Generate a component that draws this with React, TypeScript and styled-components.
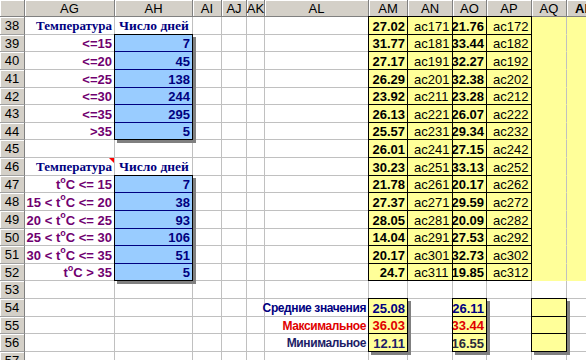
import React from 'react';
import styled, {createGlobalStyle} from 'styled-components';

const FONT = `"Liberation Sans Narrow", "Arial Narrow", "Liberation Sans", Arial, sans-serif`;
const SERIF = `"Liberation Serif", "Times New Roman", serif`;
const GRID = '#c0c0c0';
const YELLOW = '#ffff99';
const BLUE = '#99ccff';
const NAVY = '#000080';
const PURPLE = '#700070';
const RED = '#e00000';

const COLS = [
    {name: 'AG', w: 90},
    {name: 'AH', w: 78},
    {name: 'AI', w: 29},
    {name: 'AJ', w: 25},
    {name: 'AK', w: 18},
    {name: 'AL', w: 104},
    {name: 'AM', w: 39},
    {name: 'AN', w: 45},
    {name: 'AO', w: 34},
    {name: 'AP', w: 45},
    {name: 'AQ', w: 35},
    {name: 'AR', w: 36},
];

const FIRST_ROW = 38;
const ROWS = Array.from({length: 20}, (_, i) => FIRST_ROW + i);
const ROW_H = ROWS.map((_, i) => Math.round(17 + 17.63 * (i + 1)) - Math.round(17 + 17.63 * i));

// AM, AN, AO, AP for rows 38..52
const TABLE = [
    ['27.02', 'ac171', '21.76', 'ac172'],
    ['31.77', 'ac181', '33.44', 'ac182'],
    ['27.17', 'ac191', '32.27', 'ac192'],
    ['26.29', 'ac201', '32.38', 'ac202'],
    ['23.92', 'ac211', '23.28', 'ac212'],
    ['26.13', 'ac221', '26.07', 'ac222'],
    ['25.57', 'ac231', '29.34', 'ac232'],
    ['26.01', 'ac241', '27.15', 'ac242'],
    ['30.23', 'ac251', '33.13', 'ac252'],
    ['21.78', 'ac261', '20.17', 'ac262'],
    ['27.37', 'ac271', '29.59', 'ac272'],
    ['28.05', 'ac281', '20.09', 'ac282'],
    ['14.04', 'ac291', '27.53', 'ac292'],
    ['20.17', 'ac301', '32.73', 'ac302'],
    ['24.7', 'ac311', '19.85', 'ac312'],
];

const FIRST_BAND = [
    {label: '<=15', days: '7'},
    {label: '<=20', days: '45'},
    {label: '<=25', days: '138'},
    {label: '<=30', days: '244'},
    {label: '<=35', days: '295'},
    {label: '>35', days: '5'},
];

const SECOND_BAND = [
    {from: '', to: '<= 15', days: '7'},
    {from: '15 <', to: '<= 20', days: '38'},
    {from: '20 <', to: '<= 25', days: '93'},
    {from: '25 <', to: '<= 30', days: '106'},
    {from: '30 <', to: '<= 35', days: '51'},
    {from: '', to: '> 35', days: '5'},
];

const SUMMARY = [
    {label: 'Средние значения', color: NAVY, am: '25.08', amColor: NAVY, ao: '26.11', aoColor: NAVY},
    {label: 'Максимальное', color: RED, am: '36.03', amColor: RED, ao: '33.44', aoColor: RED},
    {label: 'Минимальное', color: '#1c1c66', am: '12.11', amColor: '#1c1c66', ao: '16.55', aoColor: '#2a2a3a'},
];

const GlobalStyle = createGlobalStyle`
  html, body {
    margin: 0;
    padding: 0;
    background: #fff;
    overflow: hidden;
  }
`;

const Sheet = styled.div`
  display: grid;
  grid-template-columns: 25px ${COLS.map(c => `${c.w}px`).join(' ')};
  grid-template-rows: 17px ${ROW_H.map(h => `${h}px`).join(' ')};
  width: 586px;
  height: 360px;
  overflow: hidden;
  font-family: ${FONT};
  font-size: 13px;
  background: #fff;
`;

const HeaderCell = styled.div<{$c: number; $active?: boolean}>`
  grid-column: ${p => p.$c};
  grid-row: 1;
  display: flex;
  align-items: center;
  justify-content: center;
  background: #d4d0c8;
  border-right: 1px solid #808080;
  border-bottom: 1px solid #808080;
  box-shadow: inset 1px 1px 0 #ffffff;
  font-weight: ${p => (p.$active ? 700 : 400)};
  color: #000;
  box-sizing: border-box;
`;

const RowHeader = styled.div<{$r: number}>`
  grid-column: 1;
  grid-row: ${p => p.$r};
  display: flex;
  align-items: center;
  justify-content: center;
  background: #d4d0c8;
  border-right: 1px solid #808080;
  border-bottom: 1px solid #a0a0a0;
  box-shadow: inset 1px 1px 0 #ffffff;
  color: #000;
  box-sizing: border-box;
`;

type CellProps = {
    $c: number;
    $r: number;
    $fill?: string;
    $right?: string;
    $bottom?: string;
    $align?: 'left' | 'right' | 'center';
    $color?: string;
    $bold?: boolean;
    $serif?: boolean;
    $size?: number;
    $spacing?: number;
};

const Cell = styled.div<CellProps>`
  position: relative;
  grid-column: ${p => p.$c};
  grid-row: ${p => p.$r};
  display: flex;
  align-items: center;
  justify-content: ${p => (p.$align === 'right' ? 'flex-end' : p.$align === 'center' ? 'center' : 'flex-start')};
  padding: 1px 2px 0 ${p => (p.$align === 'left' ? 6 : 3)}px;
  box-sizing: border-box;
  background: ${p => p.$fill || '#fff'};
  border-right: 1px solid ${p => p.$right || GRID};
  border-bottom: 1px solid ${p => p.$bottom || GRID};
  color: ${p => p.$color || '#000'};
  font-weight: ${p => (p.$bold ? 700 : 400)};
  font-family: ${p => (p.$serif ? SERIF : FONT)};
  font-size: ${p => p.$size || 13}px;
  letter-spacing: ${p => p.$spacing || 0}px;
  white-space: nowrap;
`;

const Frame = styled.div<{$c: number; $r: number; $span: number; $shadow?: boolean; $cols?: number}>`
  grid-column: ${p => p.$c} / span ${p => p.$cols || 1};
  grid-row: ${p => p.$r} / span ${p => p.$span};
  border: 1px solid #000;
  margin: -1px 0 0 -1px;
  box-shadow: ${p => (p.$shadow ? '3px 3px 0 #808080' : 'none')};
  pointer-events: none;
  z-index: 1;
`;

const Sup = styled.span`
  position: relative;
  top: -5px;
  font-size: 9px;
  line-height: 0;
`;

const CommentMark = styled.span`
  position: absolute;
  top: 0;
  right: 0;
  width: 0;
  height: 0;
  border-top: 5px solid #ff0000;
  border-left: 5px solid transparent;
`;

const col = (name: string) => COLS.findIndex(c => c.name === name) + 2;
const row = (r: number) => r - FIRST_ROW + 2;

const TempLabel: React.FC<{from: string; to: string}> = ({from, to}) => (
    <>
        {from ? `${from}\u00a0` : ''}t<Sup>o</Sup>C&nbsp;{to}
    </>
);

const App: React.FC = () => {
    const cells: React.ReactNode[] = [];

    ROWS.forEach(r => {
        COLS.forEach(({name}) => {
            const key = `${name}${r}`;
            const base = {$c: col(name), $r: row(r), key};
            const inTable = r >= 38 && r <= 52;
            const inSummary = r >= 54 && r <= 56;

            if (name === 'AG') {
                if (r === 38 || r === 46) {
                    cells.push(
                        <Cell {...base} $align="right" $color={NAVY} $bold $serif $size={13}>
                            Температура
                            {r === 46 && <CommentMark/>}
                        </Cell>
                    );
                    return;
                }
                if (r >= 39 && r <= 44) {
                    cells.push(
                        <Cell {...base} $align="right" $color={PURPLE} $bold>
                            {FIRST_BAND[r - 39].label}
                        </Cell>
                    );
                    return;
                }
                if (r >= 47 && r <= 52) {
                    const b = SECOND_BAND[r - 47];
                    cells.push(
                        <Cell {...base} $align="right" $color={PURPLE} $bold>
                            <TempLabel from={b.from} to={b.to}/>
                        </Cell>
                    );
                    return;
                }
            }

            if (name === 'AH') {
                if (r === 38 || r === 46) {
                    cells.push(
                        <Cell {...base} $align="center" $color={NAVY} $bold $serif $size={13.5}>
                            Число дней
                        </Cell>
                    );
                    return;
                }
                const band = r >= 39 && r <= 44 ? FIRST_BAND[r - 39] : r >= 47 && r <= 52 ? SECOND_BAND[r - 47] : null;
                if (band) {
                    const last = r === 44 || r === 52;
                    cells.push(
                        <Cell {...base} $align="right" $fill={BLUE} $color={NAVY} $bold
                              $right="#000" $bottom={last ? '#000' : NAVY}>
                            {band.days}
                        </Cell>
                    );
                    return;
                }
            }

            if (['AM', 'AN', 'AO', 'AP'].includes(name) && inTable) {
                const idx = ['AM', 'AN', 'AO', 'AP'].indexOf(name);
                const numeric = idx % 2 === 0;
                cells.push(
                    <Cell {...base} $fill={YELLOW} $right="#000" $bottom="#000"
                          $align={numeric ? 'right' : 'left'} $bold={numeric}>
                        {TABLE[r - 38][idx]}
                    </Cell>
                );
                return;
            }

            if ((name === 'AQ' || name === 'AR') && inTable) {
                cells.push(
                    <Cell {...base} $fill={YELLOW} $bottom={YELLOW} $right={name === 'AQ' ? GRID : YELLOW}/>
                );
                return;
            }

            if (name === 'AL' && inSummary) {
                const s = SUMMARY[r - 54];
                cells.push(
                    <Cell {...base} $align="right" $color={s.color} $bold $size={12} $spacing={-0.4}>
                        {s.label}
                    </Cell>
                );
                return;
            }

            if ((name === 'AM' || name === 'AO' || name === 'AQ') && inSummary) {
                const s = SUMMARY[r - 54];
                const text = name === 'AM' ? s.am : name === 'AO' ? s.ao : '';
                const color = name === 'AM' ? s.amColor : s.aoColor;
                cells.push(
                    <Cell {...base} $fill={YELLOW} $right="#000" $bottom="#000"
                          $align="right" $bold $color={color}>
                        {text}
                    </Cell>
                );
                return;
            }

            cells.push(<Cell {...base}/>);
        });
    });

    return (
        <>
            <GlobalStyle/>
            <Sheet>
                <HeaderCell $c={1}/>
                {COLS.map(c => (
                    <HeaderCell key={c.name} $c={col(c.name)} $active={c.name === 'AR'}>
                        {c.name}
                    </HeaderCell>
                ))}
                {ROWS.map(r => (
                    <RowHeader key={r} $r={row(r)}>{r}</RowHeader>
                ))}
                {cells}
                <Frame $c={col('AH')} $r={row(39)} $span={6} $shadow/>
                <Frame $c={col('AH')} $r={row(47)} $span={6} $shadow/>
                <Frame $c={col('AM')} $r={row(38)} $span={15} $cols={4}/>
                <Frame $c={col('AM')} $r={row(54)} $span={3} $shadow/>
                <Frame $c={col('AO')} $r={row(54)} $span={3} $shadow/>
                <Frame $c={col('AQ')} $r={row(54)} $span={3} $shadow/>
            </Sheet>
        </>
    );
};

export default App;
